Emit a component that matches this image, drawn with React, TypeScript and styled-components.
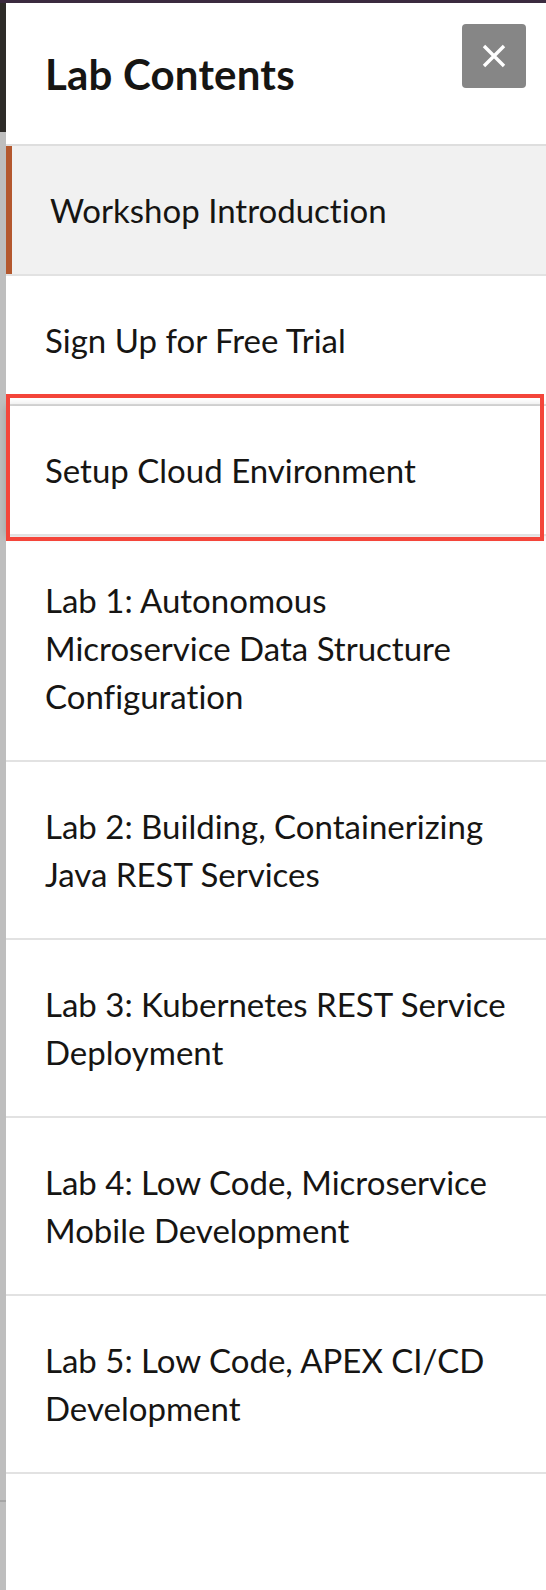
import React from "react";
import styled, { createGlobalStyle, css } from "styled-components";

const GlobalStyle = createGlobalStyle`
  html, body { margin: 0; padding: 0; }
  body {
    font-family: Lato, "Open Sans", "Noto Sans", sans-serif;
    color: #161513;
    background: #ffffff;
    font-variant-ligatures: none;
  }
  * { box-sizing: border-box; }
`;

const Page = styled.div`
  width: 546px;
  height: 1590px;
  display: flex;
  flex-direction: column;
  overflow: hidden;
`;

const TopBar = styled.div`
  height: 3px;
  flex: none;
  background: #3b2a3f;
`;

const Main = styled.div`
  flex: 1;
  display: flex;
  min-height: 0;
`;

const Rail = styled.div`
  width: 6px;
  flex: none;
  display: flex;
  flex-direction: column;
  background: #bebebe;
`;

const RailSegment = styled.div<{ $h?: number; $color: string }>`
  flex: ${(p) => (p.$h ? "none" : "1")};
  height: ${(p) => (p.$h ? `${p.$h}px` : "auto")};
  background: ${(p) => p.$color};
`;

const Panel = styled.aside`
  flex: 1;
  display: flex;
  flex-direction: column;
  background: #ffffff;
`;

const Header = styled.header`
  height: 143px;
  flex: none;
  display: flex;
  justify-content: space-between;
  align-items: flex-start;
  padding: 21px 20px 0 39px;
  border-bottom: 2px solid #dedede;
`;

const Title = styled.h1`
  margin: 26px 0 0;
  font-size: 42px;
  line-height: 48px;
  font-weight: 700;
  letter-spacing: 0.2px;
  color: #161513;
`;

const CloseButton = styled.button`
  width: 64px;
  height: 64px;
  border: none;
  border-radius: 4px;
  background: #868686;
  display: flex;
  align-items: center;
  justify-content: center;
  padding: 0;
  cursor: pointer;
`;

const List = styled.ul`
  list-style: none;
  margin: 0;
  padding: 0;
`;

const Row = styled.li<{ $active?: boolean; $highlighted?: boolean }>`
  position: relative;
  padding: 40px 36px 40px ${(p) => (p.$active ? "44px" : "39px")};
  font-size: 33px;
  line-height: 48px;
  color: #161513;
  border-bottom: 2px solid #e2e2e2;
  ${(p) =>
    p.$active &&
    css`
      background: #f1f1f1;
      box-shadow: inset 6px 0 0 #b4582e;
    `}
  ${(p) =>
    p.$highlighted &&
    css`
      z-index: 1;
      box-shadow: 0 0 8px rgba(0, 0, 0, 0.18);
      &::after {
        content: "";
        position: absolute;
        top: -12px;
        bottom: -7px;
        left: 0;
        right: 2px;
        border: 4px solid #f4453a;
        pointer-events: none;
      }
    `}
`;

const items = [
  { label: "Workshop Introduction", active: true },
  { label: "Sign Up for Free Trial" },
  { label: "Setup Cloud Environment", highlighted: true },
  { label: "Lab 1: Autonomous Microservice Data Structure Configuration" },
  { label: "Lab 2: Building, Containerizing Java REST Services" },
  { label: "Lab 3: Kubernetes REST Service Deployment" },
  { label: "Lab 4: Low Code, Microservice Mobile Development" },
  { label: "Lab 5: Low Code, APEX CI/CD Development" },
];

export default function App() {
  return (
    <>
      <GlobalStyle />
      <Page>
        <TopBar />
        <Main>
          <Rail>
            <RailSegment $h={129} $color="#2d2b28" />
            <RailSegment $h={1368} $color="#bebebe" />
            <RailSegment $h={2} $color="#a6a6a6" />
            <RailSegment $color="#bebebe" />
          </Rail>
          <Panel>
            <Header>
              <Title>Lab Contents</Title>
              <CloseButton aria-label="Close">
                <svg width="24" height="24" viewBox="0 0 24 24">
                  <path
                    d="M2 2 L22 22 M22 2 L2 22"
                    stroke="#ffffff"
                    strokeWidth="3.4"
                    fill="none"
                  />
                </svg>
              </CloseButton>
            </Header>
            <List>
              {items.map((it) => (
                <Row key={it.label} $active={it.active} $highlighted={it.highlighted}>
                  {it.label}
                </Row>
              ))}
            </List>
          </Panel>
        </Main>
      </Page>
    </>
  );
}
